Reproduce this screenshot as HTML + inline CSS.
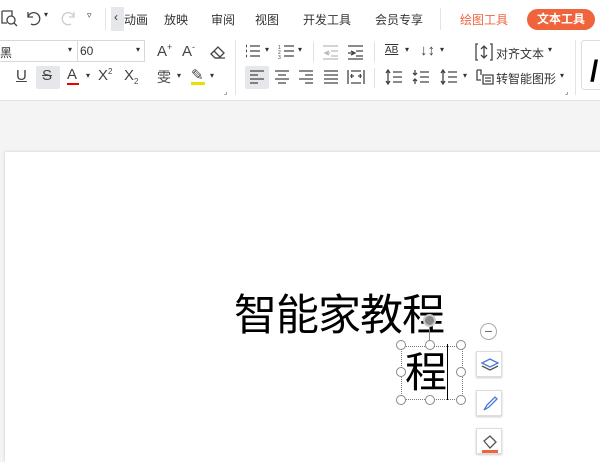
<!DOCTYPE html>
<html><head><meta charset="utf-8">
<style>
*{margin:0;padding:0;box-sizing:border-box}
body{width:600px;height:450px;overflow:hidden;background:#f4f4f5;font-family:"Liberation Sans","Noto Sans CJK SC",sans-serif;position:relative;color:#333}
.rib{position:absolute;left:0;top:0;width:600px;height:101px;background:#fff;border-bottom:1px solid #e2e2e2}
.t{position:absolute;font-size:12px;color:#333;white-space:nowrap}
.ic{position:absolute;font-size:15px;color:#444;white-space:nowrap}
.sep{position:absolute;width:1px;background:#e3e3e3}
.box{position:absolute;border:1px solid #d8d8d8;background:#fff;height:22px}
.slide{position:absolute;left:5px;top:152px;width:600px;height:310px;background:#fff;box-shadow:0 0 3px #ccc}
.h{position:absolute;width:10px;height:10px;border:1px solid #888;border-radius:50%;background:#fff}
.sb{position:absolute;width:26px;height:26px;background:#fff;border:1px solid #ddd;box-shadow:0 1px 2px #ccc}
svg.s{position:absolute}
svg.s path,svg.s line,svg.s circle{stroke:#444;stroke-width:1.3;fill:none}
</style></head><body>
<div class="rib">
  <svg class="s" style="left:0;top:8px" width="20" height="20"><path d="M2 3h10v5M2 3v12h5"/><circle cx="11" cy="12" r="4" fill="none"/><path d="M14 15l3 3"/></svg>
  <svg class="s" style="left:24px;top:8px" width="20" height="20"><path d="M4 4v5h5"/><path d="M4 9a6 6 0 1 1 3 7"/></svg><div class="t" style="left:44px;top:10px;font-size:8px">▾</div>
  <svg class="s" style="left:58px;top:8px" width="20" height="20"><path d="M16 4v5h-5" style="stroke:#ccc"/><path d="M16 9a6 6 0 1 0-3 7" style="stroke:#ccc"/></svg>
  <div class="t" style="left:87px;top:10px;font-size:9px">▿</div>
  <div class="sep" style="left:105px;top:8px;height:22px"></div>
  <div style="position:absolute;left:111px;top:7px;width:13px;height:24px;background:#e6e7ea"></div>
  <div class="t" style="left:114px;top:10px">‹</div>
  <div class="t" style="left:124px;top:11px">动画</div>
  <div class="t" style="left:164px;top:11px">放映</div>
  <div class="t" style="left:211px;top:11px">审阅</div>
  <div class="t" style="left:255px;top:11px">视图</div>
  <div class="t" style="left:303px;top:11px">开发工具</div>
  <div class="t" style="left:375px;top:11px">会员专享</div>
  <div class="sep" style="left:440px;top:8px;height:22px"></div>
  <div class="t" style="left:460px;top:11px;color:#f0643c">绘图工具</div>
  <div style="position:absolute;left:527px;top:9px;width:68px;height:21px;border-radius:11px;background:#f0643c;color:#fff;font-size:12px;font-weight:bold;text-align:center;line-height:21px">文本工具</div>

  <div class="box" style="left:-2px;top:40px;width:80px"></div>
  <div class="t" style="left:0;top:44px">黑</div><div class="t" style="left:68px;top:45px;font-size:8px">▾</div>
  <div class="box" style="left:77px;top:40px;width:68px"></div>
  <div class="t" style="left:80px;top:44px">60</div><div class="t" style="left:136px;top:45px;font-size:8px">▾</div>
  <div class="ic" style="left:157px;top:42px">A<sup style="font-size:9px">+</sup></div>
  <div class="ic" style="left:182px;top:42px">A<sup style="font-size:9px">-</sup></div>
  <svg class="s" style="left:208px;top:43px" width="20" height="18"><path d="M3 11l7-7 6 6-5 5H7z"/><path d="M7 15h10M6 8l6 6"/></svg>
  <div class="sep" style="left:235px;top:40px;height:55px"></div>
  <svg class="s" style="left:244px;top:43px" width="20" height="18"><path d="M2 3h1M2 8h1M2 13h1" style="stroke-width:2.5"/><path d="M6 3h10M6 8h10M6 13h10"/></svg><div class="t" style="left:265px;top:45px;font-size:8px">▾</div>
  <svg class="s" style="left:277px;top:43px" width="20" height="18"><path d="M7 3h10M7 8h10M7 13h10"/><text x="1" y="6" font-size="5" fill="#444">1</text><text x="1" y="11" font-size="5" fill="#444">2</text><text x="1" y="16" font-size="5" fill="#444">3</text></svg><div class="t" style="left:298px;top:45px;font-size:8px">▾</div>
  <div class="sep" style="left:313px;top:42px;height:20px"></div>
  <svg class="s" style="left:321px;top:43px" width="20" height="18"><path d="M2 3h15M10 8h7M10 13h7M2 16h15M8 8l-4 2 4 2M4 10h5" style="stroke:#bbb"/></svg>
  <svg class="s" style="left:346px;top:43px" width="20" height="18"><path d="M2 3h15M10 8h7M10 13h7M2 16h15M5 8l4 2-4 2M2 10h6"/></svg>
  <div class="sep" style="left:374px;top:42px;height:20px"></div>
  <div class="t" style="left:385px;top:45px;font-size:10px;text-decoration:overline underline">AB</div><div class="t" style="left:405px;top:45px;font-size:8px">▾</div>
  <div class="ic" style="left:420px;top:42px">↓↕</div><div class="t" style="left:440px;top:45px;font-size:8px">▾</div>
  <svg class="s" style="left:475px;top:42px" width="18" height="20"><path d="M3 2h-2v16h2M15 2h2v16h-2M9 4v12M6 7l3-3 3 3M6 13l3 3 3-3"/></svg>
  <div class="t" style="left:496px;top:45px">对齐文本</div><div class="t" style="left:548px;top:45px;font-size:8px">▾</div>
  <div class="sep" style="left:575px;top:40px;height:55px"></div>
  <div style="position:absolute;left:581px;top:40px;width:30px;height:50px;border:1px solid #ddd;border-radius:3px"></div>
  <div style="position:absolute;left:590px;top:55px;font-size:30px;font-weight:bold;color:#000">/</div>

  <div class="ic" style="left:16px;top:67px;text-decoration:underline">U</div>
  <div style="position:absolute;left:36px;top:66px;width:24px;height:23px;background:#e6e7ea;border-radius:2px"></div>
  <div class="ic" style="left:42px;top:67px;text-decoration:line-through">S</div>
  <div class="ic" style="left:67px;top:66px">A</div><div style="position:absolute;left:67px;top:83px;width:12px;height:2px;background:#e00"></div><div class="t" style="left:86px;top:71px;font-size:8px">▾</div>
  <div class="ic" style="left:98px;top:67px">X<sup style="font-size:8px">2</sup></div>
  <div class="ic" style="left:124px;top:67px">X<sub style="font-size:8px">2</sub></div>
  <div class="ic" style="left:157px;top:67px;font-size:14px">雯</div><div class="t" style="left:177px;top:71px;font-size:8px">▾</div>
  <div class="ic" style="left:191px;top:66px">✎</div><div style="position:absolute;left:191px;top:82px;width:14px;height:3px;background:#e8e000"></div><div class="t" style="left:210px;top:71px;font-size:8px">▾</div>
  <div class="t" style="left:224px;top:88px;font-size:7px">⌟</div>
  <div style="position:absolute;left:245px;top:66px;width:24px;height:23px;background:#e6e7ea;border-radius:2px"></div>
  <svg class="s" style="left:249px;top:69px" width="16" height="16"><path d="M1 2h14M1 6h8M1 10h14M1 14h8"/></svg>
  <svg class="s" style="left:274px;top:69px" width="16" height="16"><path d="M1 2h14M4 6h8M1 10h14M4 14h8"/></svg>
  <svg class="s" style="left:298px;top:69px" width="16" height="16"><path d="M1 2h14M7 6h8M1 10h14M7 14h8"/></svg>
  <svg class="s" style="left:323px;top:69px" width="16" height="16"><path d="M1 2h14M1 6h14M1 10h14M1 14h14"/></svg>
  <svg class="s" style="left:347px;top:69px" width="18" height="16"><path d="M1 1v14M17 1v14M4 2h10M4 14h10M4 7h3M11 7h3M5 5l-1 2 1 2M13 5l1 2-1 2"/></svg>
  <div class="sep" style="left:374px;top:68px;height:20px"></div>
  <svg class="s" style="left:385px;top:69px" width="18" height="16"><path d="M3 1v14M1 4l2-3 2 3M1 12l2 3 2-3M8 3h9M8 8h9M8 13h9"/></svg>
  <svg class="s" style="left:412px;top:69px" width="18" height="16"><path d="M3 1v5M3 10v5M1 4l2 2 2-2M1 12l2-2 2 2M8 3h9M8 8h9M8 13h9"/></svg>
  <svg class="s" style="left:440px;top:69px" width="18" height="16"><path d="M3 1v14M1 4l2-3 2 3M1 12l2 3 2-3M8 3h9M8 8h9M8 13h9"/></svg><div class="t" style="left:463px;top:71px;font-size:8px">▾</div>
  <svg class="s" style="left:476px;top:68px" width="18" height="18"><path d="M1 2h4v5M1 2v10h4M7 7h10v9H7zM9 10h6M9 13h6"/></svg>
  <div class="t" style="left:496px;top:70px">转智能图形</div><div class="t" style="left:560px;top:71px;font-size:8px">▾</div>
  <div class="t" style="left:565px;top:88px;font-size:7px">⌟</div>
</div>

<div class="slide"></div>
<div style="position:absolute;left:234px;top:284px;font-size:43px;color:#000;font-family:'Noto Sans CJK SC',sans-serif;line-height:56px;letter-spacing:-1px">智能家教程</div>
<div style="position:absolute;left:401px;top:346px;width:62px;height:54px;border:1px dotted #777"></div>
<div style="position:absolute;left:429px;top:325px;width:1px;height:20px;background:#888"></div>
<div style="position:absolute;left:423px;top:314px;width:13px;height:13px;border-radius:50%;background:#888;border:2px solid #ccc"></div>
<div style="position:absolute;left:405px;top:340px;font-size:42px;color:#000;font-family:'Noto Sans CJK SC',sans-serif;line-height:60px">程</div>
<div style="position:absolute;left:447px;top:344px;width:1px;height:56px;background:#000"></div>
<div class="h" style="left:396px;top:340px"></div><div class="h" style="left:425px;top:340px"></div><div class="h" style="left:456px;top:340px"></div>
<div class="h" style="left:396px;top:367px"></div><div class="h" style="left:456px;top:367px"></div>
<div class="h" style="left:396px;top:395px"></div><div class="h" style="left:425px;top:395px"></div><div class="h" style="left:456px;top:395px"></div>
<div style="position:absolute;left:480px;top:323px;width:17px;height:17px;border:1px solid #aaa;border-radius:50%;background:#fff;text-align:center;line-height:14px;font-size:14px;color:#666">−</div>
<div class="sb" style="left:476px;top:351px"><svg width="26" height="26"><path d="M5 11l8-4 8 4-8 4z" fill="none" stroke="#4a7bd6" stroke-width="1.3"/><path d="M5 14l8 4 8-4" fill="none" stroke="#555" stroke-width="1.3"/></svg></div>
<div class="sb" style="left:476px;top:390px"><svg width="26" height="26"><path d="M7 19l3-5 8-8 2 2-8 8z" fill="none" stroke="#4a7bd6" stroke-width="1.3"/></svg></div>
<div class="sb" style="left:476px;top:428px"><svg width="26" height="26"><path d="M7 12l6-5 6 6-6 6z" fill="none" stroke="#555" stroke-width="1.3"/><rect x="5" y="21" width="16" height="3" fill="#f0643c"/></svg></div>
</body></html>
